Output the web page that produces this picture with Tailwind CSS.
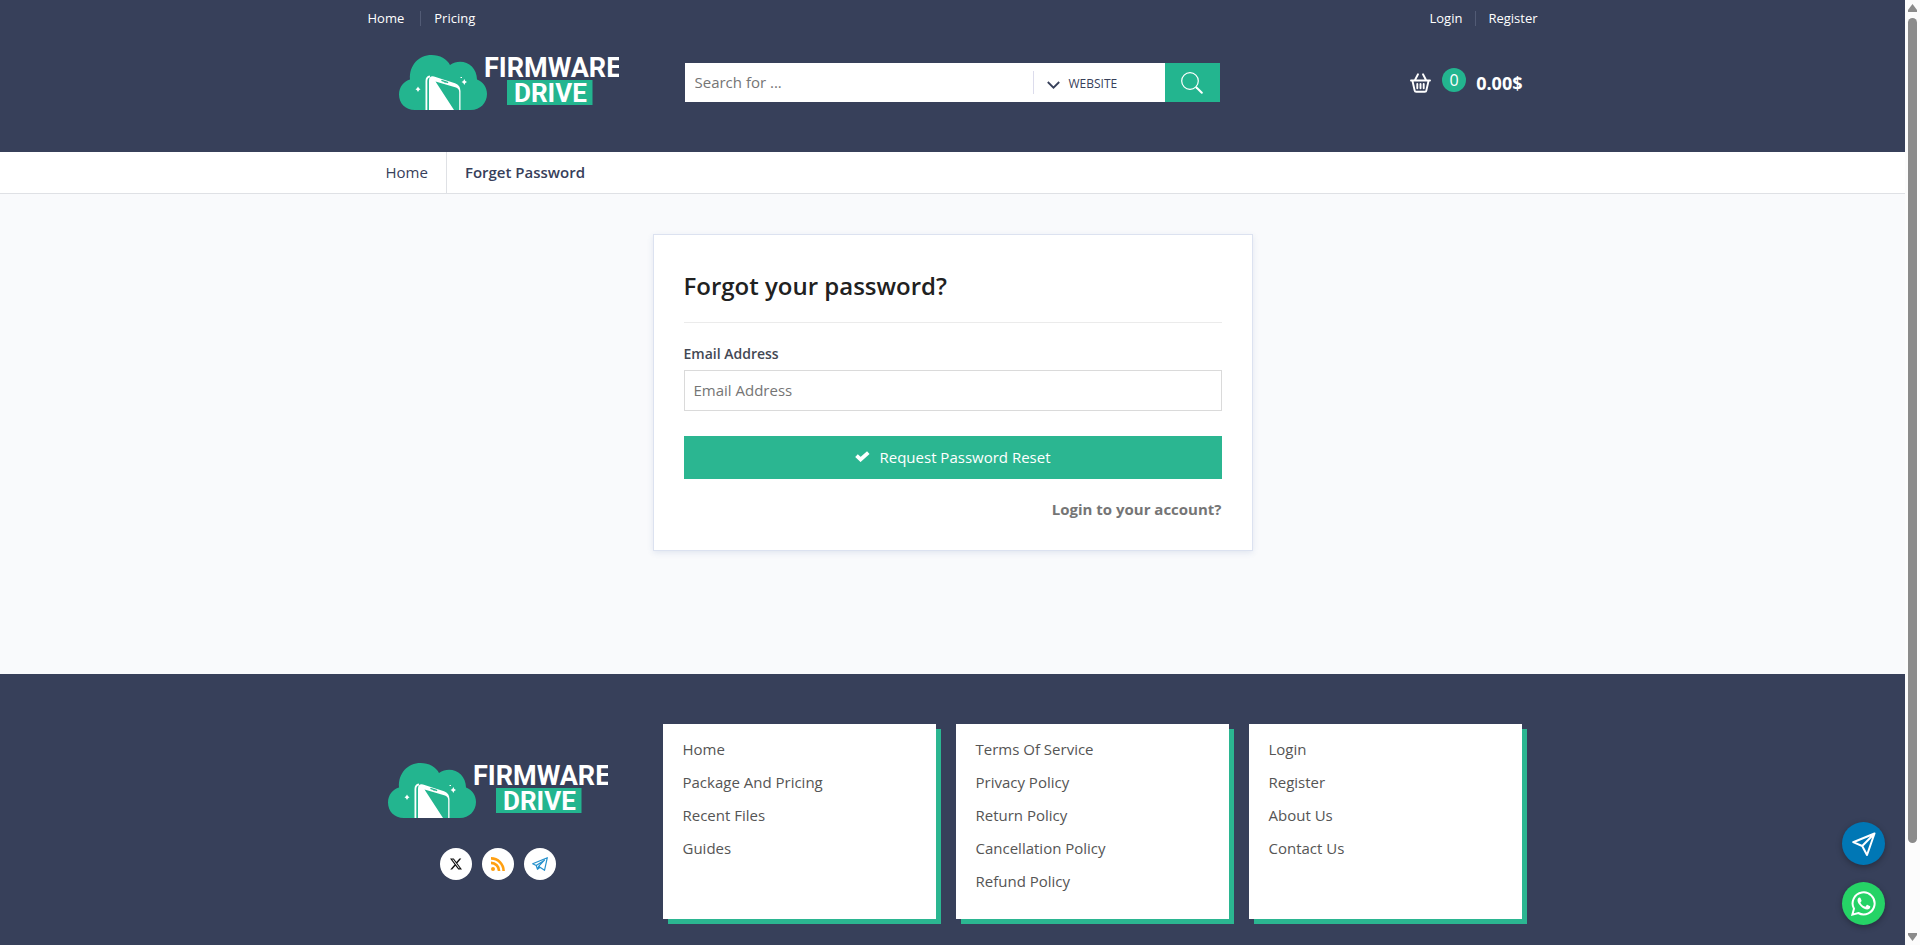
<!DOCTYPE html>
<html lang="en">
<head>
    <meta charset="UTF-8">
    <meta name="viewport" content="width=device-width, initial-scale=1.0">
    <title>Forget Password - Firmware Drive</title>
    <script src="https://cdn.jsdelivr.net/npm/@tailwindcss/browser@4"></script>
</head>
<body class="flex h-screen overflow-hidden bg-[#f9fafc] font-['Open_Sans',sans-serif] text-[15px] leading-5 text-[#37405a]">
    <!-- Logo, shared by header and footer -->
    <svg class="hidden">
        <symbol id="logo" viewBox="0 0 220 55">
            <path fill="#23b58f" d="M16 55C6 55 0 48 0 39.500C0 32 5 26 11 24.500C10 10 20 0 32.500 0C41 0 48 4 51 10C63 2 78 10 78 24.500C84 27 88 32 88 39C88 48 81 55 72 55Z"/>
            <path fill="none" stroke="#fff" stroke-width="1.800" d="M27.400 55V26Q27.400 22 31 21.500"/>
            <path fill="#fff" d="M30 55V26Q30 20.500 35 21.500L56 28.300Q61.500 30.500 61.500 36V55H60.200V37Q60.200 33.500 57 32.500L36.500 26.500L55 55Z"/>
            <path stroke="#23b58f" stroke-width="1.500" stroke-linecap="round" d="M43 25.600L48.500 27.400M45.500 26.700L47 27.100"/>
            <path fill="#fff" d="M19 31.500L20 33.200L21.500 34.200L20 35.200L19 37L18 35.200L16.500 34.200L18 33.200ZM65.300 24L66.300 26L68 27L66.300 28L65.300 30L64.300 28L62.500 27L64.300 26ZM61.500 22h1.500v1h-1.500z"/>
            <text x="85" y="22" fill="#fff" font-family="Roboto, sans-serif" font-weight="700" font-size="27">FIRMWARE</text>
            <path fill="#23b58f" d="M108 25H193.500V50H108z"/>
            <text x="115" y="47" fill="#fff" font-family="Roboto, sans-serif" font-weight="700" font-size="26">DRIVE</text>
        </symbol>
    </svg>

    <div class="flex min-w-0 flex-1 flex-col">
        <header class="shrink-0 bg-[#37405a] pb-[42px] text-white">
            <div class="mx-auto max-w-[1170px]">
                <div class="flex items-center justify-between pt-2 text-[13px]">
                    <nav class="flex items-center">
                        <a href="#">Home</a>
                        <span class="mr-[13px] ml-4 h-[15px] w-px bg-[#525b75]"></span>
                        <a href="#">Pricing</a>
                    </nav>
                    <nav class="flex items-center">
                        <a href="#">Login</a>
                        <span class="mr-3 ml-[13px] h-[15px] w-px bg-[#525b75]"></span>
                        <a href="#">Register</a>
                    </nav>
                </div>
                <div class="mt-[27px] flex items-center pr-[15px] pl-[31px]">
                    <a href="#" aria-label="Firmware Drive">
                        <svg class="block h-[55px] w-[220px] overflow-visible"><use href="#logo"/></svg>
                    </a>
                    <form class="ml-[66px] flex h-[39px] w-[535px] bg-white">
                        <input type="text" aria-label="Search" placeholder="Search for ..." class="min-w-0 flex-1 px-2.5 pb-0.5 text-[15px] outline-none placeholder:text-[#757575]">
                        <div class="relative flex w-[132px] items-center">
                            <span class="h-[23px] w-px bg-[#dcdcec]"></span>
                            <select aria-label="Search in" class="h-full w-full appearance-none bg-transparent pt-0.5 pl-[35px] text-[12px] text-[#37405a] outline-none">
                                <option>WEBSITE</option>
                            </select>
                            <svg class="pointer-events-none absolute top-[18px] left-[14px] h-2 w-[13px]" viewBox="0 0 13 8" fill="none" stroke="#37405a" stroke-width="1.800"><path d="M.8 1L6.500 6.700L12.200 1"/></svg>
                        </div>
                        <button type="submit" aria-label="Search" class="flex w-[55px] items-center justify-center bg-[#23b58f]">
                            <svg class="size-[22px]" viewBox="0 0 22 22" fill="none" stroke="#fff"><circle cx="9" cy="9" r="8.300" stroke-width="1.200"/><path stroke-width="2" stroke-linecap="round" d="M15.500 15.500L20.800 20.800"/></svg>
                        </button>
                    </form>
                    <a href="#" class="ml-auto flex items-center">
                        <svg class="h-5 w-[21px]" viewBox="0 0 21 20" fill="none" stroke="#fff" stroke-width="1.900" stroke-linecap="round" stroke-linejoin="round"><path d="M1 7.500H20M2.500 8L4.600 17.300Q4.800 18.700 6.300 18.700H14.700Q16.200 18.700 16.400 17.300L18.500 8M5 7L8 1.300M16 7L13 1.300M7.300 11V15.300M10.500 11V15.300M13.700 11V15.300"/></svg>
                        <span class="mr-2.5 mb-1.5 ml-[11px] flex size-6 items-center justify-center rounded-full bg-[#23b58f] text-[16px]">0</span>
                        <span class="text-[18px] font-bold">0.00$</span>
                    </a>
                </div>
            </div>
        </header>

        <nav class="shrink-0 border-b border-[#dfe1e5] bg-white">
            <div class="mx-auto flex max-w-[1170px] leading-[41px]">
                <a href="#" class="border-r border-[#dfe1e5] px-[18px]">Home</a>
                <span class="px-[18px] font-semibold">Forget Password</span>
            </div>
        </nav>

        <main class="shrink-0 pt-10 pb-[123px]">
            <form class="mx-auto max-w-[600px] border border-[#dce2f0] bg-white px-[30px] pt-[30px] pb-[31px] shadow-[0_2px_6px_rgba(60,90,160,0.12)]">
                <h1 class="border-b border-[#ebebeb] pt-1 pb-5 text-[24px] leading-[33px] font-semibold text-[#212121]">Forgot your password?</h1>
                <label for="email" class="mt-[21px] block text-[14px] font-semibold text-[#434854]">Email Address</label>
                <input id="email" type="email" placeholder="Email Address" class="mt-[6px] h-[41px] w-full border border-[#dadada] px-[9px] pb-0.5 text-[15px] outline-none placeholder:text-[#757575]">
                <button type="submit" class="mt-[25px] flex h-[43px] w-full items-center justify-center bg-[#2bb691] pb-0.5 text-white">
                    <svg class="mr-2.5 h-[11px] w-[15px]" viewBox="0 0 15 11" fill="none" stroke="#fff" stroke-width="3.800"><path d="M1.500 4.700L5.600 8.500L13.300 1.700"/></svg>
                    Request Password Reset
                </button>
                <p class="mt-5 text-right font-bold text-[#757575]"><a href="#">Login to your account?</a></p>
            </form>
        </main>

        <footer class="flex-1 bg-[#37405a] pt-[50px]">
            <div class="mx-auto flex max-w-[1170px] pr-4">
                <div class="flex flex-1 flex-col items-center pt-[39px] pr-[34px]">
                    <svg class="block h-[55px] w-[220px] overflow-visible"><use href="#logo"/></svg>
                    <div class="mt-[30px] flex gap-2.5">
                        <a href="#" aria-label="X" class="flex size-8 items-center justify-center rounded-full bg-white">
                            <svg class="size-3" viewBox="0 0 24 24" fill="#111"><path d="M18.900 1.200h3.700l-8 9.100L24 22.800h-7.400l-5.800-7.500-6.600 7.500H.5l8.600-9.800L0 1.200h7.600l5.200 6.900zM17.600 20.600h2L6.500 3.200H4.300z"/></svg>
                        </a>
                        <a href="#" aria-label="RSS" class="flex size-8 items-center justify-center rounded-full bg-white">
                            <svg class="size-[14px]" viewBox="0 0 14 14" fill="none" stroke="#ffa012" stroke-width="2.600"><circle cx="2" cy="12" r="2" fill="#ffa012" stroke="none"/><path d="M0 5.900A8.100 8.100 0 0 1 8.100 14M0 1.400A12.600 12.600 0 0 1 12.600 14"/></svg>
                        </a>
                        <a href="#" aria-label="Telegram" class="flex size-8 items-center justify-center rounded-full bg-white">
                            <svg class="h-[14px] w-4" viewBox="0 0 16 14" fill="none" stroke="#2490cc" stroke-width="1.200" stroke-linejoin="round"><path d="M15.300.7L.7 6.700L4.200 8.500L5.500 12.300L8 10.300L12.500 13.300ZM4.200 8.500L12.500 3.200L6.800 9.200L5.500 12.300M6.800 9.200L8 10.300"/></svg>
                        </a>
                    </div>
                </div>
                <div class="grid w-[859px] grid-cols-3 gap-5 text-[#555]">
                    <ul class="min-h-[195px] space-y-[13px] bg-white px-5 pt-[15px] pb-5 shadow-[5px_5px_0_#2bb691]">
                        <li><a href="#">Home</a></li>
                        <li><a href="#">Package And Pricing</a></li>
                        <li><a href="#">Recent Files</a></li>
                        <li><a href="#">Guides</a></li>
                    </ul>
                    <ul class="space-y-[13px] bg-white px-5 pt-[15px] pb-5 shadow-[5px_5px_0_#2bb691]">
                        <li><a href="#">Terms Of Service</a></li>
                        <li><a href="#">Privacy Policy</a></li>
                        <li><a href="#">Return Policy</a></li>
                        <li><a href="#">Cancellation Policy</a></li>
                        <li><a href="#">Refund Policy</a></li>
                    </ul>
                    <ul class="space-y-[13px] bg-white px-5 pt-[15px] pb-5 shadow-[5px_5px_0_#2bb691]">
                        <li><a href="#">Login</a></li>
                        <li><a href="#">Register</a></li>
                        <li><a href="#">About Us</a></li>
                        <li><a href="#">Contact Us</a></li>
                    </ul>
                </div>
            </div>
        </footer>
    </div>

    <!-- Floating chat buttons -->
    <div class="fixed right-[35px] bottom-5 flex flex-col gap-[17px]">
        <a href="#" aria-label="Telegram chat" class="flex size-[43px] items-center justify-center rounded-full bg-[#0077b5] shadow-[0_2px_6px_rgba(0,0,0,0.3)]">
            <svg class="size-6" viewBox="0 0 24 24" fill="none" stroke="#fff" stroke-width="2" stroke-linejoin="round"><path d="M22.500 1.500L1.200 10.200L10.200 14L15 23ZM10.200 14L22.500 1.500"/></svg>
        </a>
        <a href="#" aria-label="WhatsApp chat" class="flex size-[43px] items-center justify-center rounded-full bg-[#25d366] shadow-[0_2px_6px_rgba(0,0,0,0.3)]">
            <svg class="size-[25px]" viewBox="0 0 25 25"><path fill="none" stroke="#fff" stroke-width="2" d="M1.400 23.600L3 17.700A11 11 0 1 1 7.300 22Z"/><path fill="#fff" d="M8.400 6.500c.7-.1.900 0 1.200.7l.9 2.200c.2.500-.1.900-.9 1.800-.3.300-.2.500 0 .8 1 1.700 2.400 2.900 4.200 3.600.4.200.6.100.9-.2l1-1.300c.3-.3.500-.3.900-.2l2.100 1c.4.200.6.300.6.600.1 2-1.600 3-3 3-2.200 0-4.800-1.500-6.700-3.500-1.800-2-3.100-3.900-3.100-5.600 0-1.300.8-2.700 1.900-2.900z"/></svg>
        </a>
    </div>

    <!-- Page scroll track -->
    <div class="flex w-[15px] shrink-0 flex-col items-center bg-[#fcfcfc] py-[4px]">
        <svg class="h-2 w-[9px] shrink-0" viewBox="0 0 9 8" fill="#8b8b8b"><path d="M4.500 0L9 6V8H0V6Z"/></svg>
        <div class="mt-[6px] h-[88%] w-[9px] rounded-full bg-[#8b8b8b]"></div>
        <svg class="mt-auto h-2 w-[9px] shrink-0" viewBox="0 0 9 8" fill="#8b8b8b"><path d="M4.500 8L9 2V0H0V2Z"/></svg>
    </div>
</body>
</html>
